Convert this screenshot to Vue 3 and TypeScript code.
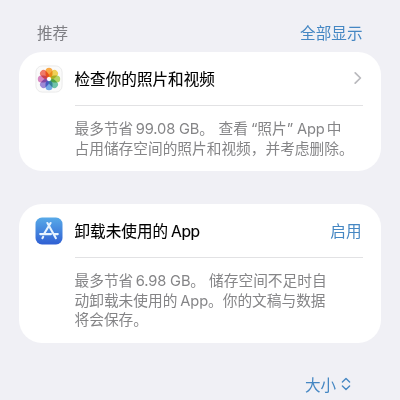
<script setup lang="ts">
interface Piece {
  text: string
  kind: 'han' | 'latin'
  gap?: number
}

const photoLines: Piece[][] = [
  [
    { text: '最多节省', kind: 'han' },
    { text: '99.08 GB', kind: 'latin', gap: 2.5 },
    { text: '。', kind: 'han' },
    { text: '查看', kind: 'han', gap: 4.5 },
    { text: '“', kind: 'latin', gap: 3 },
    { text: '照片', kind: 'han' },
    { text: '”', kind: 'latin' },
    { text: 'App', kind: 'latin', gap: 4 },
    { text: '中', kind: 'han', gap: 2 },
  ],
  [{ text: '占用储存空间的照片和视频，并考虑删除。', kind: 'han' }],
]

const appLines: Piece[][] = [
  [
    { text: '最多节省', kind: 'han' },
    { text: '6.98 GB', kind: 'latin', gap: 2.5 },
    { text: '。', kind: 'han' },
    { text: '储存空间不足时自', kind: 'han', gap: 4 },
  ],
  [
    { text: '动卸载未使用的', kind: 'han' },
    { text: 'App', kind: 'latin', gap: 3 },
    { text: '。你的文稿与数据', kind: 'han' },
  ],
  [{ text: '将会保存。', kind: 'han' }],
]

const petals = [
  { angle: 0, color: '#f79a25' },
  { angle: 45, color: '#ecc838' },
  { angle: 90, color: '#a5cd4a' },
  { angle: 135, color: '#55b99a' },
  { angle: 180, color: '#5b9be0' },
  { angle: 225, color: '#8d75cf' },
  { angle: 270, color: '#cf72b7' },
  { angle: 315, color: '#ed6350' },
]
</script>

<template>
  <main class="screen">
    <header class="heading">
      <span>推荐</span>
      <a class="link">全部显示</a>
    </header>

    <section class="card">
      <div class="row">
        <svg class="icon" viewBox="0 0 28 28">
          <rect x=".9" y=".9" width="26.2" height="26.2" rx="6.3" fill="#fafafa" stroke="#e6e6e6" stroke-width=".8" />
          <g class="flower">
            <rect
              v-for="p in petals"
              :key="p.angle"
              class="petal"
              x="10.5"
              y="2.8"
              width="7"
              height="9.6"
              rx="3.5"
              :fill="p.color"
              :transform="`rotate(${p.angle} 14 14)`"
            />
          </g>
          <circle cx="14" cy="14" r="1.9" fill="#fff" />
        </svg>
        <div class="rowbody">
          <h2 class="title">检查你的照片和视频</h2>
          <svg class="chevron" viewBox="0 0 8 14"><path d="M1.2 1.8 6.4 7 1.2 12.2" /></svg>
        </div>
      </div>
      <div class="desc">
        <p v-for="(line, i) in photoLines" :key="i">
          <span v-for="(s, j) in line" :key="j" :class="s.kind" :style="{ marginLeft: (s.gap ?? 0) + 'px' }">{{ s.text }}</span>
        </p>
      </div>
    </section>

    <section class="card second">
      <div class="row">
        <svg class="icon" viewBox="0 0 28 28">
          <defs>
            <linearGradient id="store" x1="0" y1="0" x2="0" y2="1">
              <stop offset="0" stop-color="#58aae8" />
              <stop offset="1" stop-color="#2f5fd3" />
            </linearGradient>
          </defs>
          <rect x=".5" y=".5" width="27" height="27" rx="6.5" fill="url(#store)" />
          <g class="tools">
            <path d="M15.6 6 9 17M12.4 6 20.9 21.2M8.2 19.8 7.4 21.2M5.2 17.1H16M19.6 17.1H22.8" />
          </g>
        </svg>
        <div class="rowbody">
          <h2 class="title">卸载未使用的<span class="app">App</span></h2>
          <a class="link">启用</a>
        </div>
      </div>
      <div class="desc">
        <p v-for="(line, i) in appLines" :key="i">
          <span v-for="(s, j) in line" :key="j" :class="s.kind" :style="{ marginLeft: (s.gap ?? 0) + 'px' }">{{ s.text }}</span>
        </p>
      </div>
    </section>

    <footer class="sort">
      <span>大小</span>
      <svg class="sorticon" viewBox="0 0 10 14"><path d="M1.4 5 5 1.6 8.6 5M1.4 9 5 12.4 8.6 9" /></svg>
    </footer>
  </main>
</template>

<style>
body {
  background: #f0f0f5;
}
</style>

<style scoped>
.screen {
  width: 400px;
  height: 400px;
  box-sizing: border-box;
  padding: 15px 19px 0;
  overflow: hidden;
  background: #f0f0f5;
  font-family: Inter, "Noto Sans CJK SC", sans-serif;
  font-size: 15.6px;
  white-space: nowrap;
}
.heading {
  display: flex;
  justify-content: space-between;
  height: 37px;
  line-height: 38px;
  padding: 0 18.5px 0 18px;
  color: #808085;
}
.link {
  color: #4587c3;
}
.card {
  height: 119px;
  border-radius: 23px;
  background: #fff;
}
.second {
  margin-top: 33px;
  height: 139px;
}
.row {
  display: flex;
  padding-left: 15.5px;
}
.icon {
  flex: none;
  width: 28px;
  height: 28px;
  margin: 13px 12px 0 0;
}
.flower {
  isolation: isolate;
}
.petal {
  mix-blend-mode: multiply;
  opacity: 0.85;
}
.tools {
  fill: none;
  stroke: #e8f4ff;
  stroke-width: 2.1;
  stroke-linecap: round;
}
.rowbody {
  display: flex;
  align-items: center;
  justify-content: space-between;
  width: 288px;
  height: 54px;
  box-sizing: border-box;
  border-bottom: 1px solid #e2e2e4;
  padding: 0 1px 1.5px 0;
}
.title {
  margin: 0;
  font-size: 15.6px;
  font-weight: 400;
  color: #000;
  -webkit-text-stroke: 0.1px #000;
}
.app {
  margin-left: 3px;
  letter-spacing: -0.45px;
}
.chevron {
  width: 8px;
  height: 14px;
  fill: none;
  stroke: #b9b9bd;
  stroke-width: 1.7;
  stroke-linecap: round;
  stroke-linejoin: round;
}
.desc {
  padding: 14px 0 0 55.5px;
  font-size: 14.7px;
  color: #858587;
}
.desc p {
  display: flex;
  height: 19.6px;
  line-height: 19.6px;
  margin: 0;
}
.latin {
  white-space: pre;
  letter-spacing: -0.15px;
}
.sort {
  display: flex;
  align-items: center;
  height: 30px;
  margin-top: 26px;
  padding-left: 286px;
  color: #4587c3;
}
.sorticon {
  width: 10px;
  height: 14px;
  margin-left: 4.5px;
  fill: none;
  stroke: #4587c3;
  stroke-width: 1.4;
  stroke-linecap: round;
  stroke-linejoin: round;
}
</style>
